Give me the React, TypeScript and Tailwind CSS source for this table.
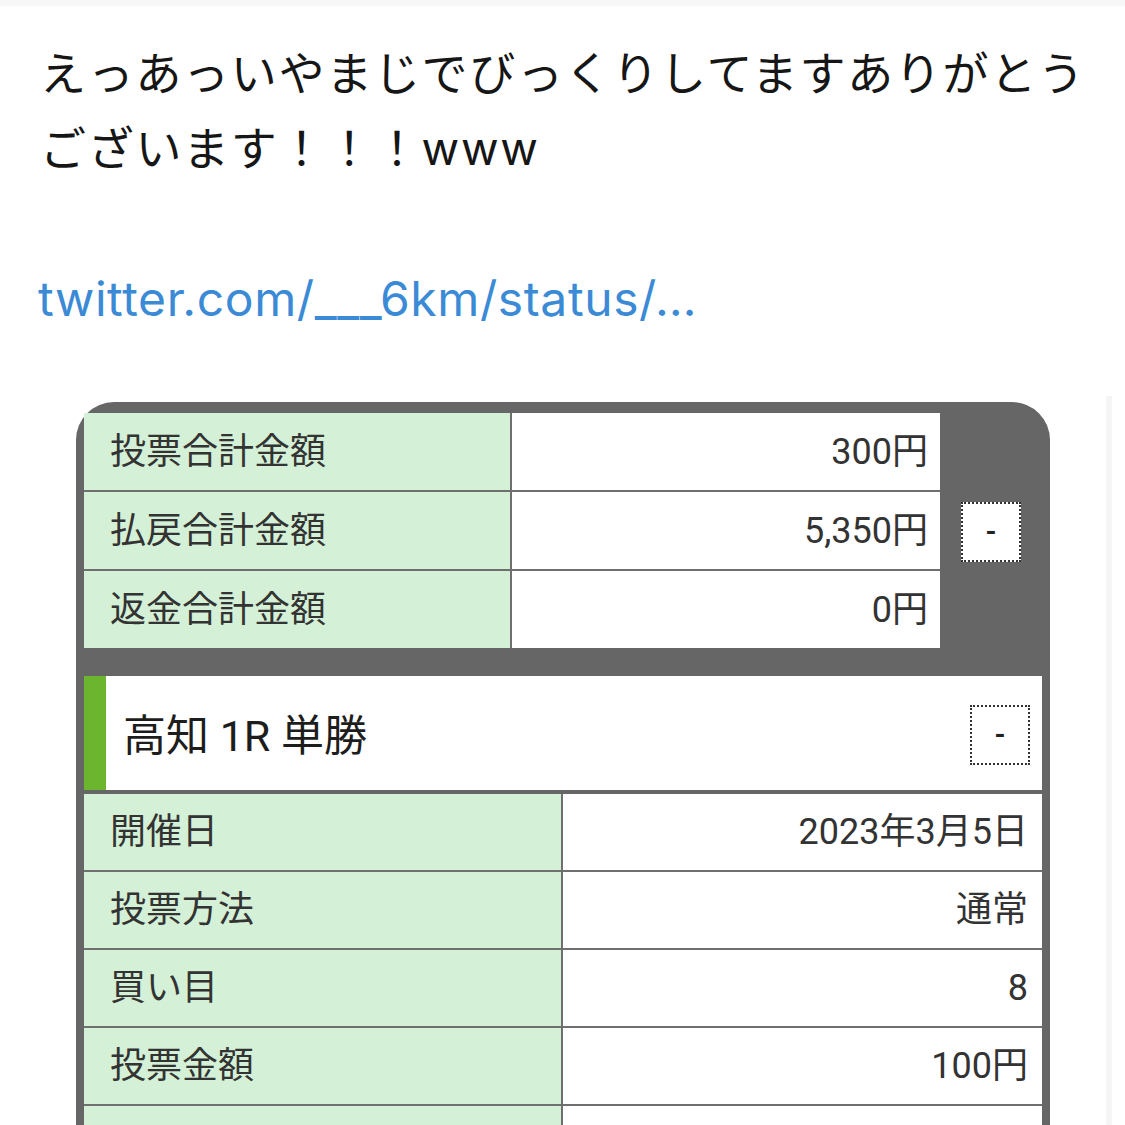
const summary = [
  { label: '投票合計金額', value: '300円' },
  { label: '払戻合計金額', value: '5,350円' },
  { label: '返金合計金額', value: '0円' },
];

// last row is cut by the bottom of the screenshot, its text is not visible
const details = [
  { label: '開催日', value: '2023年3月5日' },
  { label: '投票方法', value: '通常' },
  { label: '買い目', value: '8' },
  { label: '投票金額', value: '100円' },
  { label: '', value: '' },
];

const tableFont = { fontFamily: 'Roboto, "Noto Sans CJK JP", sans-serif' };

function ToggleButton({ className = '' }: { className?: string }) {
  return (
    <div
      className={`flex h-[60px] w-[60px] items-center justify-center border-2 border-dotted border-[#333] bg-white text-[28px] font-bold leading-none text-[#222] ${className}`}
    >
      -
    </div>
  );
}

function App() {
  return (
    <main className="min-h-screen bg-white">
      <div className="h-[6px] bg-[#f7f7f7]" />
      <section
        className="px-[40px] pt-[30px] text-[46px] leading-[75px] text-[#161616]"
        style={{ fontFamily: 'Inter, "Noto Sans CJK JP", sans-serif' }}
      >
        <p className="whitespace-nowrap tracking-[1.7px]">
          えっあっいやまじでびっくりしてますありがとう
          <br />
          ございます！！！www
        </p>
        <p className="h-[75px]" />
        <p className="-ml-[2px] whitespace-nowrap text-[48px] tracking-[0.6px] text-[#3b8ad6]">
          twitter.com/___6km/status/…
        </p>
      </section>

      <div className="mt-[66px] flex items-start">
        <div
          className="ml-[76px] w-[974px] rounded-t-[38px] bg-[#666666] px-[8px] pt-[11px]"
          style={tableFont}
        >
          {/* totals */}
          <div className="flex">
            <div className="flex w-[856px] flex-col gap-[2px] bg-[#6f6f6f]">
              {summary.map((row) => (
                <div key={row.label} className="flex h-[77px] gap-[2px]">
                  <div className="flex w-[426px] items-center bg-[#d4f0d6] pl-[26px] text-[36px] text-[#333]">
                    {row.label}
                  </div>
                  <div className="flex flex-1 items-center justify-end bg-white pr-[12px] text-[36px] text-[#333]">
                    {row.value}
                  </div>
                </div>
              ))}
            </div>
            <div className="flex flex-1 items-center justify-center">
              <ToggleButton className="mt-[2px]" />
            </div>
          </div>

          <div className="h-[28px]" />

          {/* race header */}
          <div className="flex h-[114px] items-center border-l-[22px] border-[#6cb52f] bg-white pl-[17px] pr-[12px]">
            <span className="mt-[6px] flex-1 text-[43px] text-[#1d1d1d]">高知 1R 単勝</span>
            <ToggleButton className="mt-[4px]" />
          </div>

          {/* details */}
          <div className="mt-[4px] flex flex-col gap-[2px] bg-[#6f6f6f]">
            {details.map((row, i) => (
              <div key={i} className="flex h-[76px] gap-[2px]">
                <div className="flex w-[477px] items-center bg-[#d4f0d6] pl-[26px] text-[36px] text-[#333]">
                  {row.label}
                </div>
                <div className="flex flex-1 items-center justify-end bg-white pr-[14px] text-[36px] text-[#333]">
                  {row.value}
                </div>
              </div>
            ))}
          </div>
        </div>
        <div className="ml-[56px] mt-[-6px] h-[800px] w-[6px] bg-[#f5f5f5]" />
      </div>
    </main>
  );
}

export default App;
